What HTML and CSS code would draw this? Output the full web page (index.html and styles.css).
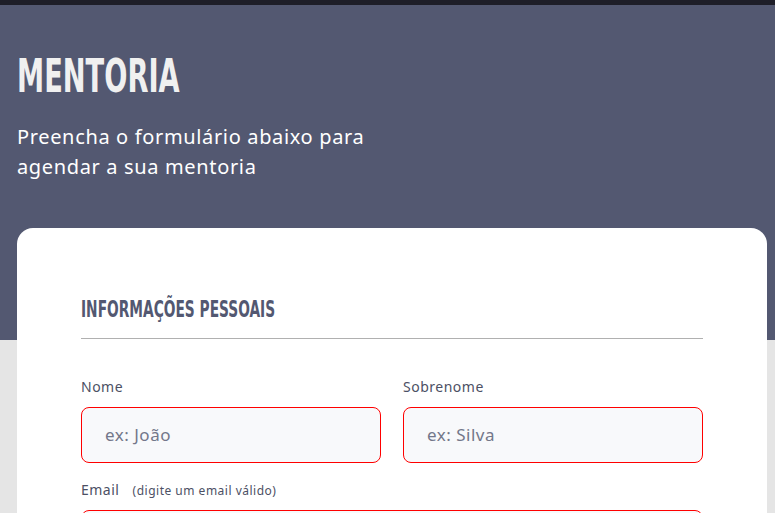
FILE: index.html
```html
<!DOCTYPE html>
<html lang="pt-BR">
<head>
<meta charset="utf-8">
<title>Mentoria</title>
<link rel="stylesheet" href="styles.css">
</head>
<body>
<div class="topbar"></div>
<div class="page">
  <header class="hero">
    <h1 class="hero-title"><span>MENTORIA</span></h1>
    <p class="hero-sub">Preencha o formulário abaixo para<br>agendar a sua mentoria</p>
  </header>
  <main class="card">
    <h2 class="section-title"><span>INFORMAÇÕES PESSOAIS</span></h2>
    <div class="divider"></div>
    <div class="row">
      <div class="field">
        <label class="label">Nome</label>
        <div class="input">ex: João</div>
      </div>
      <div class="field">
        <label class="label">Sobrenome</label>
        <div class="input">ex: Silva</div>
      </div>
    </div>
    <div class="field">
      <label class="label">Email <small class="hint">(digite um email válido)</small></label>
      <div class="input"></div>
    </div>
  </main>
</div>
</body>
</html>
```

FILE: styles.css
```css
html, body {
  margin: 0;
  padding: 0;
}
body {
  font-family: "Noto Sans", "Open Sans", sans-serif;
  background: #e5e5e5;
  overflow: hidden;
  height: 513px;
}
.topbar {
  height: 5px;
  background: #1e1e28;
}
.page {
  background: linear-gradient(to bottom, #535871 0, #535871 335px, #e5e5e5 335px);
  height: 508px;
  overflow: hidden;
}
.hero {
  padding: 46px 17px 0 17px;
  height: 177px;
}
.hero-title {
  margin: 0;
  font-family: "DejaVu Sans Condensed", "DejaVu Sans", sans-serif;
  font-weight: 700;
  font-size: 47px;
  line-height: 50px;
  color: #f0f0f0;
}
.hero-title span {
  display: inline-block;
  transform: scaleX(0.645);
  transform-origin: left center;
}
.hero-sub {
  margin: 21px 0 0 0;
  font-size: 20px;
  letter-spacing: 0.65px;
  line-height: 30px;
  color: #ffffff;
}
.card {
  margin: 0 8px 0 17px;
  background: #ffffff;
  border-radius: 16px 16px 0 0;
  padding: 67px 64px 0 64px;
  min-height: 300px;
}
.section-title {
  margin: 0;
  font-family: "DejaVu Sans Condensed", "DejaVu Sans", sans-serif;
  font-weight: 700;
  font-size: 23px;
  line-height: 28px;
  color: #535871;
}
.section-title span {
  display: inline-block;
  transform: scaleX(0.665);
  transform-origin: left center;
}
.divider {
  height: 1px;
  background: #b0b0b0;
  margin-top: 15px;
}
.row {
  display: grid;
  grid-template-columns: 300px 300px;
  column-gap: 22px;
  margin-top: 38px;
}
.field {
  display: flex;
  flex-direction: column;
}
.label {
  font-size: 14px;
  letter-spacing: 0.5px;
  line-height: 20px;
  color: #4c5064;
  height: 20px;
  margin-bottom: 10px;
}
.hint {
  font-size: 12px;
  letter-spacing: 0.5px;
  margin-left: 9px;
}
.input {
  box-sizing: border-box;
  height: 56px;
  border: 1px solid #ff0000;
  border-radius: 8px;
  background: #f8f9fb;
  padding: 0 23px;
  font-size: 17px;
  letter-spacing: 0.5px;
  line-height: 54px;
  color: #73778a;
  margin-bottom: 17px;
}
```
